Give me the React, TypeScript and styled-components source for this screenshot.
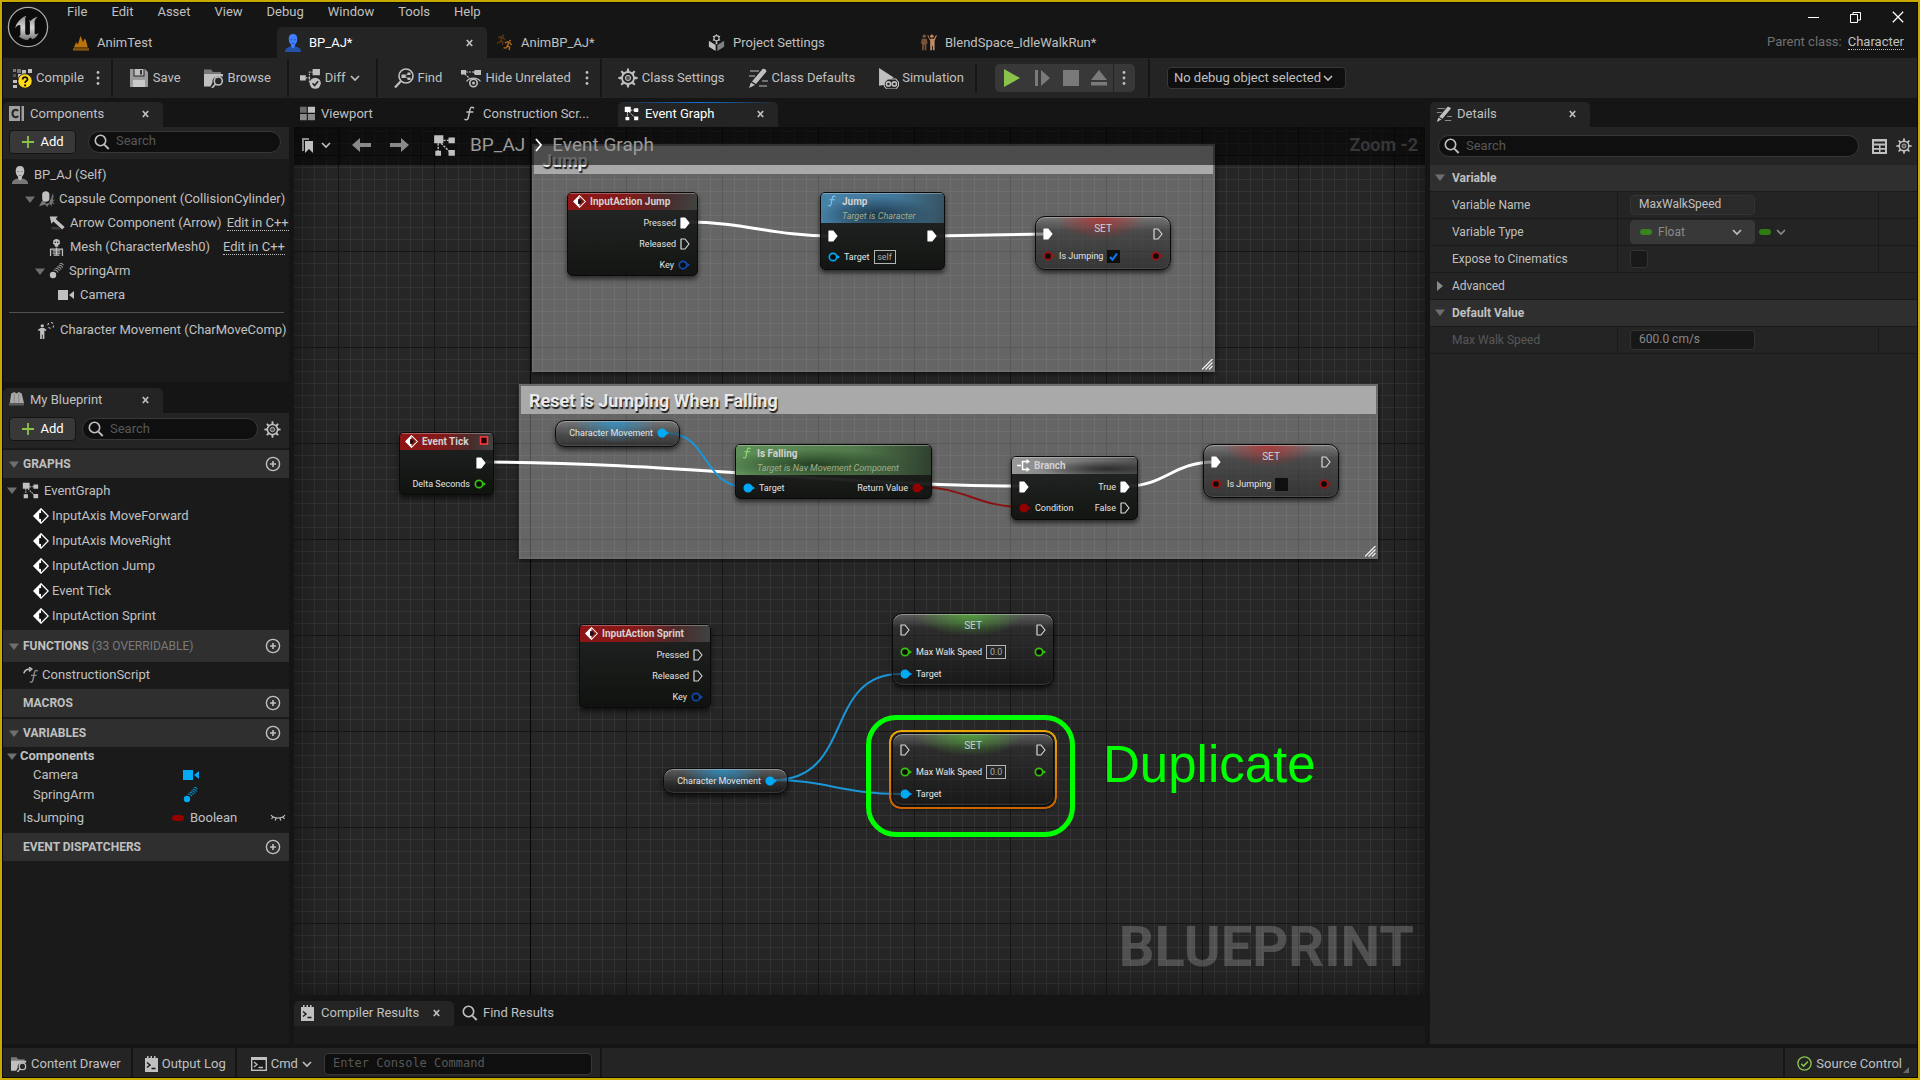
import React from "react";
import styled, { createGlobalStyle, css } from "styled-components";

const c = {
  title: "#151515",
  panel: "#242424",
  recess: "#1a1a1a",
  header: "#2f2f2f",
  input: "#0f0f0f",
  line: "#383838",
  text: "#c0c0c0",
  dim: "#575757",
  white: "#ffffff",
  blue: "#00aaf5",
  red: "#920000",
  green: "#35c20c",
};

const Global = createGlobalStyle`
  * { box-sizing: border-box; }
  body { margin: 0; background: ${c.title}; }
  body, button, input, select { font-family: Roboto, "Liberation Sans", sans-serif; font-size: 13px; line-height: 16px; color: ${c.text}; }
  button { border: 0; background: none; padding: 0; cursor: pointer; }
  input, select { margin: 0; outline: 0; }
  input::placeholder { color: ${c.dim}; opacity: 1; }
  ul { list-style: none; margin: 0; padding: 0; }
  h2, h3, p { margin: 0; font-weight: 400; font-size: 13px; }
  svg { display: block; flex: none; }
`;

/* ---------- icons ---------- */

type IconProps = { size?: number; w?: number; h?: number; box?: string; color?: string; children?: React.ReactNode };

const Svg = ({ size = 16, w, h, box = "0 0 20 20", color = c.text, children }: IconProps) => (
  <svg width={w ?? size} height={h ?? size} viewBox={box} fill={color} stroke="none" aria-hidden="true">
    {children}
  </svg>
);

const Chevron = ({ color = c.text }: { color?: string }) => (
  <Svg w={10} h={10} box="0 0 10 10">
    <path d="M1 3l4 4 4-4" fill="none" stroke={color} strokeWidth="1.6" />
  </Svg>
);
const Dots = () => (
  <Svg w={4} h={16} box="0 0 4 16">
    <circle cx="2" cy="2.5" r="1.4" />
    <circle cx="2" cy="8" r="1.4" />
    <circle cx="2" cy="13.5" r="1.4" />
  </Svg>
);
const Cross = () => (
  <Svg w={7} h={8} box="0 0 7 8">
    <path d="M.8 1l5.4 6M6.2 1L.8 7" stroke={c.text} strokeWidth="1.7" />
  </Svg>
);
const Lens = ({ size = 16 }: { size?: number }) => (
  <Svg size={size} box="0 0 16 16">
    <circle cx="6.5" cy="6.5" r="5.2" fill="none" stroke={c.text} strokeWidth="1.6" />
    <path d="M10.3 10.6l4.4 4.4" stroke={c.text} strokeWidth="1.8" />
  </Svg>
);
const Gear = ({ size = 16, color = c.text }: { size?: number; color?: string }) => (
  <Svg size={size}>
    <circle cx="10" cy="10" r="6" fill="none" stroke={color} strokeWidth="1.8" />
    <circle cx="10" cy="10" r="2.6" fill="#555" stroke={color} strokeWidth="1" />
    {[0, 45, 90, 135, 180, 225, 270, 315].map((a) => (
      <path key={a} d="M8.6 4.2L9.1.4h1.8l.5 3.8z" fill={color} transform={`rotate(${a} 10 10)`} />
    ))}
  </Svg>
);
const Plus = () => (
  <Svg size={14} box="0 0 14 14">
    <path d="M7 1v12M1 7h12" stroke="#8bc34a" strokeWidth="1.8" />
  </Svg>
);
const PlusCircle = () => (
  <Svg size={16} box="0 0 16 16">
    <circle cx="8" cy="8" r="6.6" fill="none" stroke={c.text} strokeWidth="1.4" />
    <path d="M8 5v6M5 8h6" stroke={c.text} strokeWidth="1.6" />
  </Svg>
);
const Down = () => (
  <Svg w={10} h={7} box="0 0 10 7" color="#6e6e6e">
    <path d="M0 .5h10L5 7z" />
  </Svg>
);
const Right = () => (
  <Svg w={10} h={10} box="0 0 10 10" color="#8a8a8a">
    <path d="M2 0v10l6-5z" />
  </Svg>
);
const Logo = () => (
  <Svg size={42} box="0 0 42 42">
    <defs>
      <linearGradient id="lg" x1="0" y1="0" x2="0" y2="1">
        <stop offset="0" stopColor="#8c8c8c" />
        <stop offset=".5" stopColor="#d6d6d6" />
        <stop offset="1" stopColor="#777" />
      </linearGradient>
    </defs>
    <circle cx="21" cy="21" r="19.6" fill="#0c0c0c" stroke="#a8a8a8" strokeWidth="1.3" />
    <path
      fill="url(#lg)"
      d="M20 9.500c-5.500 1.800-10.500 6.500-11.700 12.500 1.500-2 3.200-3.400 4.300-3 .8.300.8 1 .8 2v7.500c0 1.200-.7 1.600-1.600 1.700 2.300 2.400 5.700 3.700 9 3.700l2.300-2.500 2.500 1.900c2.800-1.300 5-3.600 6-6.600-1.300 1.200-2.500 1.800-3.300 1.600-.6-.2-.7-.8-.7-1.600V15.300c.7-2 1.900-3.500 3.300-4.500-2.500.4-5.500 1.900-7.200 4.100-.5-.5-1.300-.7-1.900-.7.900.9 1.100 1.700 1.100 2.700v10.800c-.8.900-1.700 1.200-2.600 1.200-1.300 0-2.100-.8-2.100-2.500V13.300c0-1.700.7-3 1.800-3.800z"
    />
  </Svg>
);
const Person = ({ color, body }: { color: string; body: string }) => (
  <Svg size={18} color={color}>
    <path d="M1 20c0-3.500 2.500-5 6.500-6h5c4 1 6.500 2.500 6.500 6z" fill={body} />
    <path d="M10 0C6.800 0 5.200 2.300 5.200 5.300c0 3.200 1.300 5.500 2.700 6.800v2.100L10 16l2.100-1.800v-2.100c1.400-1.300 2.700-3.600 2.700-6.800C14.800 2.300 13.200 0 10 0z" />
    <path d="M7 6.300h2M11 6.300h2M8.500 10.500h3" stroke={body} strokeWidth="1" />
  </Svg>
);
const LevelIcon = () => (
  <Svg size={16} color="#b8740a">
    <path d="M0 16.500h20v3H0z" opacity=".7" />
    <path d="M1 15.500L4 9l2 3L9.500 1l3 8L14 5l2 1 2.500 9.500z" />
  </Svg>
);
const Runner = ({ color, x = 0, y = 0, o = 1 }: { color: string; x?: number; y?: number; o?: number }) => (
  <g transform={`translate(${x} ${y})`} opacity={o} fill="none" stroke={color} strokeWidth="1.6">
    <circle cx="8.500" cy="1.800" r="1.100" fill={color} stroke="none" />
    <path d="M2.500 4.500L6 3l2.500 1.500L10.500 7M7 4L5.500 7.500 8 9.500 7.500 13M5.500 7.500L4.500 10 1 10.500" />
  </g>
);
const AnimBPIcon = () => (
  <Svg size={17}>
    <Runner color="#7a4512" o={0.7} />
    <Runner color="#b06a1e" x={8} y={6} />
  </Svg>
);
const ProjectIcon = () => (
  <Svg size={17}>
    <path d="M1 8l8 5v7l-8-5z" />
    <path d="M19 8l-8 5v7l8-5z" fill="#808080" />
    <circle cx="10" cy="5" r="3" fill="none" stroke={c.text} strokeWidth="1.400" />
    {[0, 60, 120, 180, 240, 300].map((a) => (
      <path key={a} d="M9.300 2L9.600 0h.8l.3 2z" transform={`rotate(${a} 10 5)`} />
    ))}
    <path d="M9 9.500h2V12H9z" />
  </Svg>
);
const BlendIcon = () => (
  <Svg size={17}>
    <g fill="#7a5238">
      <circle cx="5" cy="2.500" r="2" />
      <path d="M2 5.500h6l1 6H7.500V19h-2v-6h-1v6h-2v-7.500H1z" />
    </g>
    <g fill="#c08a63">
      <circle cx="14" cy="2.500" r="2" />
      <path d="M9.500 1l2 4.500h5L19 1l.8.8-2.600 6V19h-2v-5h-1v5h-2.200V8L8.700 2z" />
    </g>
  </Svg>
);
const CompileIcon = () => (
  <Svg size={21} box="0 0 21 21">
    <path d="M5 1h4v4H5zM1 1h3v3H1z" fill="#777" />
    <path d="M10 2h4v4h-4zM16 1h4v4h-4zM6 6h4v4H6zM1 12h4v3H1zM1 17h4v3H1zM11 6h4v3h-4z" />
    <path d="M1 6h3v3H1z" fill="#555" />
    <circle cx="13" cy="13" r="7.200" fill="#ffd91a" stroke="#111" strokeWidth=".8" />
    <path d="M10.700 11.500c0-3 4.800-3 4.800-.2 0 1.700-2.400 1.800-2.400 3.600" fill="none" stroke="#111" strokeWidth="1.800" />
    <circle cx="13.100" cy="17.300" r="1.100" fill="#111" />
  </Svg>
);
const SaveIcon = () => (
  <Svg size={20}>
    <path d="M1 1h3.500v7.500h11V1H16l3 3v15H1z" fill="#9a9a9a" />
    <path d="M5.500 1h9v6.500h-9z" />
    <path d="M11 2h2v4.500h-2z" fill="#333" />
    <path d="M4 12h12v7H4z" fill="#c9c9c9" />
  </Svg>
);
const FolderLens = ({ size = 20 }: { size?: number }) => (
  <Svg size={size}>
    <path d="M0 1.500h7l2 2.500h8v3H0z" fill="#777" />
    <path d="M0 6h19v2.500h-5c-4 0-6 3-5.500 6l-2 4H0z" />
    <circle cx="14.300" cy="13" r="4" fill="none" stroke={c.text} strokeWidth="1.600" />
    <path d="M11.500 16l-3.500 4" stroke={c.text} strokeWidth="1.800" />
  </Svg>
);
const DiffIcon = () => (
  <Svg size={21}>
    <path d="M0 7h5.500v5H0zM12 1h7v6h-7z" />
    <path d="M5.500 9.500H9M9 9.500V4h3M9 9.500V14h2" fill="none" stroke={c.text} strokeWidth="1.200" strokeDasharray="1.500 1" />
    <circle cx="14.500" cy="14.500" r="5.300" />
    <path d="M12 14.500l2 2.200 3.200-4" fill="none" stroke="#242424" strokeWidth="1.600" />
  </Svg>
);
const FindIcon = () => (
  <Svg size={20}>
    <circle cx="12" cy="8" r="7" fill="none" stroke={c.text} strokeWidth="1.600" />
    <path d="M7 13l-6 6.500" stroke={c.text} strokeWidth="2.200" />
    <path d="M7.500 6.500h4v3.500h-4zM13.500 4.500h3v2.500h-3zM13.500 9.500h3V12h-3z" />
    <path d="M11 8l3-2M11 8.500l3 2" stroke={c.text} strokeWidth=".8" />
  </Svg>
);
const HideIcon = () => (
  <Svg size={20}>
    <path d="M0 2h5v4.500H0zM13.500 2H20v5h-4z" />
    <circle cx="15.500" cy="4.500" r="2.600" />
    <path d="M5 4h8M4 6l5 5" stroke={c.text} strokeWidth="1.200" strokeDasharray="2 1" />
    <path d="M5.500 13.500c3-4.500 11-4.500 14 0" fill="none" stroke={c.text} strokeWidth="1.200" />
    <circle cx="12.500" cy="15" r="3.700" fill="none" stroke={c.text} strokeWidth="1.600" />
    <circle cx="12.500" cy="15" r="1.500" />
  </Svg>
);
const PencilIcon = ({ size = 20 }: { size?: number }) => (
  <Svg size={size}>
    <path d="M2 3h9M1 8h6M14 13h6M11 18h8" stroke="#8a8a8a" strokeWidth="1.300" />
    <path d="M14.500 1c1.500-.8 4 .8 4 2.500L8 16l-4-2.500z" />
    <path d="M3 14.500L7 17l-6 3z" />
  </Svg>
);
const SimIcon = () => (
  <Svg size={21}>
    <path d="M1 0l14 9-5 3-3 4-6 1z" />
    <path d="M6 13.500l3-3h8l2.500 3v3.500l-2.500 3H8.500L6 17.500z" fill="#242424" stroke={c.text} strokeWidth="1" />
    <circle cx="10" cy="15.200" r="2" fill="none" stroke={c.text} strokeWidth="1.500" />
    <circle cx="15.600" cy="15.200" r="2" fill="none" stroke={c.text} strokeWidth="1.500" />
  </Svg>
);
const GraphIcon = ({ size = 16, color = c.text }: { size?: number; color?: string }) => (
  <Svg size={size} color={color}>
    <path d="M1 1h8v7H1zM13.500 3h5.500v5h-5.500zM2 14.500h5V19H2zM13.500 14h5.500v5h-5.500z" />
    <path d="M9 5.500h5M7 8l7 7M4.500 8v7" stroke={color} strokeWidth="1.200" strokeDasharray="2 1" />
  </Svg>
);
const ViewportIcon = () => (
  <Svg size={15}>
    <path d="M0 1h9v8H0z" fill="#6a6a6a" />
    <path d="M10.500 1H20v8h-9.500z" />
    <path d="M0 10.500h9V19H0zM10.500 10.500H20V19h-9.500z" fill="#8a8a8a" />
  </Svg>
);
const FIcon = ({ size = 15, color = c.text }: { size?: number; color?: string }) => (
  <Svg size={size}>
    <path d="M15.500 2.500c-2.500-1.800-4.200-.5-4.800 2L8.500 15c-.5 2.800-2 4.200-4.500 2.700M6.500 8h8" fill="none" stroke={color} strokeWidth="1.900" strokeLinecap="round" />
  </Svg>
);
const ConstructIcon = () => (
  <Svg size={16}>
    <path d="M1 8c1-4 4-5.500 8-5.500M7.500 0L11 2.500 7.500 5.500" fill="none" stroke={c.text} strokeWidth="1.800" />
    <path d="M18.500 5c-2.500-1.500-3.700-.3-4.200 2L12.500 16c-.5 2.500-2 3.500-4 2.500M10 10.500h7" fill="none" stroke="#8a8a8a" strokeWidth="1.800" />
  </Svg>
);
const CompTabIcon = () => (
  <Svg size={15} box="0 0 15 15">
    <path d="M0 0h11v15H0z" fill="#a0a0a0" />
    <path d="M9 5.200C8 3 3.500 3.200 3.500 7.500S8 12 9 9.800" fill="none" stroke="#242424" strokeWidth="2" />
    <path d="M12.500 0H15v15h-2.500z" fill="#a0a0a0" />
  </Svg>
);
const BookIcon = () => (
  <Svg size={15}>
    <path d="M3 2l4-2 3 2 3-2 4 2 3 13H1z" fill="#a9a9a9" />
    <path d="M0 15h20v3H0z" fill="#5c5c5c" />
    <path d="M7 2v12M13 2v12" stroke="#777" strokeWidth="1" />
  </Svg>
);
const CapsuleIcon = () => (
  <Svg size={16}>
    <path d="M0 19l4-7 3 1 2 3 4-1 1-4 5-6-2 6h3l-3 2 3 4-4-2v4l-3-3-3 4-2-3z" fill="#777" />
    <path d="M15 8l3-6-1 6z" fill="#777" />
    <path d="M4 4c0-5 9-5 9 0v6c0 4.500-9 4.500-9 0z" />
  </Svg>
);
const ArrowIcon = () => (
  <Svg size={16}>
    <path d="M1 2h10L8.500 5l11 10-3 3-11-10L3 11z" />
    <path d="M2 15h10l3 3H4z" fill="#3a3a3a" />
  </Svg>
);
const SkeletonIcon = () => (
  <Svg size={17}>
    <path d="M6 3c0-4 8-4 8 0v3l-2 1v2H8V7L6 6z" />
    <circle cx="8.500" cy="3.800" r=".9" fill="#1a1a1a" />
    <circle cx="11.500" cy="3.800" r=".9" fill="#1a1a1a" />
    <path d="M3 20v-8h14v8M10 10v9M5.500 14h9M5.500 16.500h9M6.500 19h7" fill="none" stroke={c.text} strokeWidth="1.500" />
  </Svg>
);
const SpringIcon = ({ color = c.text }: { color?: string }) => (
  <Svg size={16}>
    <circle cx="5" cy="15" r="4" fill={color} />
    <path d="M6 9c2-1 5 1 5 3M8 7c2-1 5 1 5 3M10 5c2-1 5 1 5 3M12 3c2-1 5 1 5 3M13.500 1c2-1 4 0 4.500 1.500" fill="none" stroke={color} strokeWidth="1.300" opacity=".75" />
  </Svg>
);
const CameraIcon = ({ color = c.text }: { color?: string }) => (
  <Svg w={17} h={16} box="0 0 17 16" color={color}>
    <path d="M0 3h10v10H0zM16 4v8l-5-4z" />
  </Svg>
);
const MoveIcon = () => (
  <Svg size={17}>
    <circle cx="5" cy="4.500" r="2" />
    <path d="M0 9l3-2h4l3 2-.8 1.500L7.500 10v10h-2v-5h-1v5h-2V10l-2 .6z" />
    <circle cx="15" cy="4" r="3.400" fill="none" stroke={c.text} strokeWidth="1.300" strokeDasharray="2.700 2.600" />
  </Svg>
);
const EventIcon = ({ size = 16 }: { size?: number }) => (
  <Svg size={size} color="#fff">
    <path d="M10 1l9 9-9 9-9-9z" fill="none" stroke="#fff" strokeWidth="1.600" />
    <path d="M10 1v5.500H8v7h2V19l-9-9z" />
    <path d="M8 6.500h2.500L14 10l-3.500 3.500H8z" fill="#111" />
  </Svg>
);
const LashIcon = () => (
  <Svg w={16} h={10} box="0 0 16 10">
    <path d="M1 2c3 4 11 4 14 0M3 4L1.500 6M6 5l-.8 2.500M10 5l.8 2.500M13 4l1.500 2" fill="none" stroke={c.text} strokeWidth="1.200" />
  </Svg>
);
const LogIcon = () => (
  <Svg w={13} h={16} box="0 0 13 16">
    <path d="M0 2h2V0h1.500v2h2V0H7v2h2V0h1.500v2H13v14H0z" />
    <path d="M2 6.500l3 2.500-3 2.500M6.500 12.500h4" fill="none" stroke="#151515" strokeWidth="1.400" />
  </Svg>
);
const CmdIcon = () => (
  <Svg w={16} h={14} box="0 0 16 14">
    <path d="M0 0h16v14H0z" />
    <path d="M1.400 3h13.200v9.600H1.400z" fill="#1a1a1a" />
    <path d="M3 5l3 2.500L3 10M7.500 10.500H12" fill="none" stroke={c.text} strokeWidth="1.300" />
  </Svg>
);
const CheckCircle = () => (
  <Svg size={15} box="0 0 15 15">
    <circle cx="7.500" cy="7.500" r="6.600" fill="none" stroke="#8bc34a" strokeWidth="1.400" />
    <path d="M4.300 7.800l2.300 2.300 4.300-4.600" fill="none" stroke="#8bc34a" strokeWidth="1.500" />
  </Svg>
);
const TableIcon = () => (
  <Svg w={15} h={15} box="0 0 15 15">
    <path d="M0 0h15v15H0z" />
    <path d="M2 2.500h11v2H2zM2 6.500h5v2.500H2zM8.500 6.500H13v2.500H8.500zM2 10.700h5V13H2zM8.500 10.700H13V13H8.500z" fill="#242424" />
  </Svg>
);
const BookmarkIcon = () => (
  <Svg w={11} h={15} box="0 0 11 15">
    <path d="M0 0h7v2H2v11H0z" fill="#8a8a8a" />
    <path d="M3 3h8v12l-4-4-4 4z" />
  </Svg>
);
const NavArrow = ({ flip }: { flip?: boolean }) => (
  <Svg w={19} h={16} box="0 0 19 16" color="#8a8a8a">
    <path d="M0 8l8-7v5h11v4H8v5z" transform={flip ? "translate(19 0) scale(-1 1)" : undefined} />
  </Svg>
);

/* ---------- window frame ---------- */

const Frame = styled.div`
  height: 100vh;
  min-height: 720px;
  display: flex;
  flex-direction: column;
  background: ${c.title};
  border: 2px solid #c8a900;
`;
const Inner = styled.div`
  flex: 1;
  min-height: 0;
  display: flex;
  flex-direction: column;
  border: 1px solid #0a0a0a;
`;
const TitleBar = styled.header`
  display: flex;
  height: 55px;
`;
const LogoCell = styled.div`
  width: 52px;
  padding: 3px 0 0 4px;
`;
const TitleMain = styled.div`
  flex: 1;
`;
const Menu = styled.nav`
  display: flex;
  height: 24px;
  button { padding: 0 12px 6px; }
`;
const DocTabs = styled.div`
  display: flex;
  gap: 2px;
  padding-left: 10px;
`;
const DocTab = styled.button<{ $active?: boolean }>`
  width: 210px;
  height: 31px;
  display: flex;
  align-items: center;
  gap: 8px;
  padding: 0 14px 0 7px;
  border-radius: 5px 5px 0 0;
  ${(p) => p.$active && css`background: ${c.panel}; color: ${c.white};`}
`;
const Grow = styled.span`
  flex: 1;
  text-align: left;
`;
const IconSlot = styled.span`
  width: 17px;
  display: flex;
  justify-content: center;
`;
const WindowSide = styled.div`
  display: flex;
  flex-direction: column;
  align-items: flex-end;
  padding-right: 13px;
`;
const WindowButtons = styled.div`
  display: flex;
  gap: 31px;
  height: 28px;
  align-items: center;
`;
const ParentClass = styled.p`
  display: flex;
  gap: 6px;
  padding-top: 3px;
  color: #707070;
`;
const DottedLink = styled.a`
  color: ${c.text};
  text-decoration: none;
  border-bottom: 1px dotted ${c.text};
  line-height: 15px;
  white-space: nowrap;
`;

/* ---------- toolbar ---------- */

const Toolbar = styled.div`
  display: flex;
  height: 40px;
  background: ${c.panel};
`;
const PlainSection = styled.div`
  display: flex;
  align-items: center;
  padding-left: 4px;
`;
const Section = styled(PlainSection)`
  margin: 1px 0;
  padding-right: 5px;
  border-right: 2px solid ${c.title};
`;
const ToolButton = styled.button<{ $lead?: number; $trail?: number }>`
  display: flex;
  align-items: center;
  gap: 4px;
  padding: 0 ${(p) => p.$trail ?? 11}px 0 ${(p) => p.$lead ?? 12}px;
  white-space: nowrap;
`;
const ToolIcon = styled.span`
  width: 20px;
  display: flex;
  justify-content: center;
`;
const DotsButton = styled.button`
  width: 16px;
  display: flex;
  justify-content: center;
`;
const PlayWrap = styled.div`
  display: flex;
  align-items: center;
  padding: 0 13px 0 18px;
  margin: 6px 0;
  border-left: 2px solid ${c.title};
`;
const PlayGroup = styled.div`
  display: flex;
  height: 28px;
  background: ${c.line};
  border-radius: 5px;
  button { width: 28px; display: flex; align-items: center; justify-content: center; }
  button:first-child { width: 34px; }
  button:last-child { width: 22px; border-left: 1px solid #242424; }
`;
const PickerArea = styled.div`
  display: flex;
  align-items: center;
  padding-left: 17px;
  margin: 1px 0;
  border-left: 2px solid ${c.title};
`;
const SelectBox = styled.span<{ $width: number; $flat?: boolean }>`
  position: relative;
  display: flex;
  align-items: center;
  width: ${(p) => p.$width}px;
  height: ${(p) => (p.$flat ? 24 : 22)}px;
  border: 1px solid ${c.line};
  border-radius: 4px;
  background: ${(p) => (p.$flat ? c.line : c.input)};
  select {
    appearance: none;
    width: 100%;
    height: 100%;
    border: 0;
    background: none;
    padding: 0 24px 0 ${(p) => (p.$flat ? 27 : 6)}px;
    ${(p) => p.$flat && css`font-size: 12px; color: #8a8a8a;`}
  }
  > svg { position: absolute; right: 12px; pointer-events: none; }
`;

/* ---------- dock ---------- */

const Dock = styled.main`
  flex: 1;
  min-height: 0;
  display: grid;
  grid-template-columns: 286px minmax(0, 1fr) 487px;
  gap: 5px;
  padding: 4px 0;
`;
const Column = styled.section`
  display: flex;
  flex-direction: column;
  min-height: 0;
  min-width: 0;
`;
const Tabs = styled.div`
  display: flex;
  gap: 2px;
  height: 25px;
  flex: none;
`;
const ResultTabs = styled(Tabs)`
  margin-top: 6px;
`;
const PanelTab = styled.button<{ $active?: boolean; $focus?: boolean }>`
  width: 160px;
  display: flex;
  align-items: center;
  gap: 6px;
  padding: 0 14px 2px 6px;
  border-radius: 5px 5px 0 0;
  white-space: nowrap;
  ${(p) => p.$active && css`background: ${c.panel};`}
  ${(p) =>
    p.$focus &&
    css`
      color: ${c.white};
      background: linear-gradient(90deg, #242424, #0f70d8 50%, #242424) top / 100% 1px no-repeat, ${c.panel};
    `}
`;
const TabIcon = styled.span`
  width: 15px;
  display: flex;
  justify-content: center;
`;
const ActionRow = styled.div<{ $height: number; $gap: number }>`
  display: flex;
  align-items: center;
  flex: none;
  height: ${(p) => p.$height}px;
  gap: ${(p) => p.$gap}px;
  padding: 0 8px 3px 6px;
  background: ${c.panel};
`;
const AddButton = styled.button`
  flex: none;
  width: 67px;
  height: 24px;
  display: flex;
  align-items: center;
  justify-content: center;
  gap: 5px;
  color: ${c.white};
  background: #383838;
  border: 1px solid #141414;
  border-radius: 4px;
`;
const SearchBox = styled.label`
  flex: 1;
  min-width: 0;
  height: 22px;
  display: flex;
  align-items: center;
  gap: 6px;
  padding: 0 8px 0 5px;
  background: ${c.input};
  border: 1px solid ${c.line};
  border-radius: 11px;
  input { flex: 1; min-width: 0; height: 20px; border: 0; background: none; padding: 0 0 2px; }
`;
const Tree = styled.ul`
  height: 223px;
  flex: none;
  padding-top: 4px;
  background: ${c.recess};
  border-radius: 0 0 3px 3px;
  margin-bottom: 6px;
`;
const TreeRow = styled.li<{ $indent: number; $height?: number; $gap?: number }>`
  display: flex;
  align-items: center;
  gap: ${(p) => p.$gap ?? 5}px;
  height: ${(p) => p.$height ?? 24}px;
  padding-left: ${(p) => p.$indent}px;
  white-space: nowrap;
`;
const Twist = styled.span`
  width: 10px;
  display: flex;
  flex: none;
`;
const EditLink = styled(DottedLink)`
  margin: 0 4px 0 auto;
`;
const Divider = styled.li`
  height: 1px;
  margin: 5px 5px 5px 6px;
  background: #505050;
`;
const Outline = styled.div`
  flex: 1;
  min-height: 0;
  overflow: hidden;
  background: ${c.recess};
`;
const GroupHead = styled.h3<{ $height?: number }>`
  display: flex;
  align-items: center;
  gap: 4px;
  height: ${(p) => p.$height ?? 28}px;
  margin-top: 2px;
  padding: 0 8px 0 6px;
  background: ${c.header};
  font-size: 12px;
  font-weight: 700;
  small { font-size: 12px; font-weight: 400; color: #7a7a7a; }
`;
const VarRow = styled.li<{ $indent: number; $height: number }>`
  display: grid;
  grid-template-columns: ${(p) => 169 - p.$indent}px 1fr 16px;
  align-items: center;
  height: ${(p) => p.$height}px;
  padding: 0 3px 0 ${(p) => p.$indent}px;
`;
const TypeCell = styled.span<{ $icon?: boolean }>`
  display: flex;
  align-items: center;
  gap: 6px;
  padding-left: ${(p) => (p.$icon ? 11 : 0)}px;
`;
const Pill = styled.i<{ $color: string }>`
  width: 12px;
  height: 6px;
  border-radius: 3px;
  background: ${(p) => p.$color};
`;
const Spring = styled.span`
  flex: 1;
`;

/* ---------- graph ---------- */

const Canvas = styled.div`
  position: relative;
  flex: 1;
  min-height: 0;
  overflow: hidden;
  background-color: #262626;
  background-image: linear-gradient(90deg, #060606 1px, transparent 1px),
    linear-gradient(90deg, #161616 1px, transparent 1px), linear-gradient(#161616 1px, transparent 1px),
    linear-gradient(90deg, #343434 1px, transparent 1px), linear-gradient(#343434 1px, transparent 1px);
  background-size: 2000px 100%, 96px 96px, 96px 96px, 12px 12px, 12px 12px;
  background-position: 236px 0, 44px 28px, 44px 28px, 8px 4px, 8px 4px;
`;
const Vignette = styled.div`
  position: absolute;
  inset: 0;
  pointer-events: none;
  box-shadow: inset 0 0 44px rgba(0, 0, 0, 0.5);
`;
const Wires = styled.svg`
  position: absolute;
  inset: 0;
  width: 100%;
  height: 100%;
  fill: none;
`;
const GraphBar = styled.div`
  position: absolute;
  inset: 0 0 auto 0;
  height: 38px;
  display: flex;
  align-items: center;
  padding: 0 7px 2px 8px;
  background: rgba(0, 0, 0, 0.55);
  line-height: 22px;
  color: #9a9a9a;
`;
const BarButton = styled.button<{ $width: number; $lead?: number; $split?: boolean }>`
  width: ${(p) => p.$width}px;
  height: 38px;
  display: flex;
  align-items: center;
  gap: 8px;
  padding-left: ${(p) => p.$lead ?? 0}px;
  ${(p) => p.$split && css`border-right: 2px solid #0c0c0c;`}
`;
const Crumbs = styled.nav`
  flex: 1;
  display: flex;
  align-items: center;
  gap: 10px;
  padding-left: 11px;
  font-size: 19px;
  span:first-of-type { padding-left: 4px; }
`;
const ZoomText = styled.span`
  font-size: 18px;
  font-weight: 700;
  color: #363636;
`;
const Comment = styled.section<{ $x: number; $y: number; $w: number; $h: number }>`
  position: absolute;
  left: ${(p) => p.$x}px;
  top: ${(p) => p.$y}px;
  width: ${(p) => p.$w}px;
  height: ${(p) => p.$h}px;
  display: flex;
  flex-direction: column;
  justify-content: space-between;
  align-items: flex-end;
  padding: 2px;
  background: rgba(255, 255, 255, 0.29);
  box-shadow: inset 0 0 0 2px rgba(110, 110, 110, 0.7), 0 2px 6px rgba(0, 0, 0, 0.6);
  h2 {
    width: 100%;
    height: 28px;
    padding-left: 8px;
    line-height: 29px;
    font-size: 18px;
    font-weight: 700;
    color: #e9e9e9;
    text-shadow: 1px 2px 1px #1a1a1a;
    background: #a9a9a9;
  }
`;
const Grip = () => (
  <Svg size={11} box="0 0 11 11">
    <path d="M0 10.500L10.500 0M3.500 10.500l7-7M7 10.500L10.500 7" stroke="#eee" strokeWidth="1.300" />
  </Svg>
);

const Node = styled.article<{ $x: number; $y: number; $w: number; $h: number; $soft?: boolean; $selected?: boolean; $glow?: string }>`
  position: absolute;
  left: ${(p) => p.$x}px;
  top: ${(p) => p.$y}px;
  width: ${(p) => p.$w}px;
  height: ${(p) => p.$h}px;
  overflow: hidden;
  font-size: 9px;
  line-height: 12px;
  color: #e4e4e4;
  border: 1px solid #0a0a0a;
  border-radius: 5px;
  background: linear-gradient(rgba(32, 35, 33, 0.93), rgba(14, 17, 14, 0.95));
  box-shadow: 0 3px 5px rgba(0, 0, 0, 0.6);
  ${(p) =>
    p.$soft &&
    css`
      border-radius: 10px;
      background: radial-gradient(ellipse 34% 22px at 48% 0, ${p.$glow}, transparent),
        linear-gradient(rgba(130, 130, 130, 0.6), rgba(50, 50, 50, 0.55) 14px, rgba(14, 14, 14, 0.55));
      box-shadow: inset 0 1px 0 rgba(200, 200, 200, 0.5), inset 0 -1px 0 rgba(140, 140, 140, 0.25), 0 3px 5px rgba(0, 0, 0, 0.6);
    `}
  ${(p) => p.$selected && css`overflow: visible;`}
`;
const Selection = styled.div`
  position: absolute;
  inset: -4px;
  border-radius: 12px;
  border: 2px solid transparent;
  background: linear-gradient(#f0a800, #cc6200) border-box;
  mask: linear-gradient(#000 0 0) padding-box exclude, linear-gradient(#000 0 0);
  pointer-events: none;
`;
const NodeHead = styled.header<{ $tone: string; $tall?: boolean }>`
  height: ${(p) => (p.$tall ? 30 : 17)}px;
  display: flex;
  gap: 4px;
  padding: 2px 4px 0 5px;
  background: ${(p) => p.$tone};
  box-shadow: inset 0 1px 0 rgba(255, 255, 255, 0.3);
  h3 { flex: 1; font-size: 10px; line-height: 13px; font-weight: 700; color: #d2d2d2; }
  em { display: block; margin-top: 2px; font-size: 9px; line-height: 12px; font-weight: 400; color: #a3ad8b; }
`;
const Rows = styled.div<{ $pad?: number; $row?: number }>`
  padding: ${(p) => p.$pad ?? 2}px 7px 0;
  display: grid;
  grid-auto-rows: ${(p) => p.$row ?? 21}px;
`;
const PinRow = styled.div`
  display: flex;
  align-items: center;
  justify-content: space-between;
`;
const PinSide = styled.span`
  display: flex;
  align-items: center;
  gap: 4px;
`;
const SetTitle = styled.h3`
  position: absolute;
  inset: 5px 0 auto 0;
  text-align: center;
  font-size: 10px;
  line-height: 14px;
  color: #cfcfcf;
`;
const ValueInput = styled.input<{ $w: number }>`
  width: ${(p) => p.$w}px;
  height: 14px;
  padding: 0;
  text-align: center;
  font-size: 9px;
  line-height: 12px;
  color: #a8a8a8;
  background: none;
  border: 1px solid #b4b4b4;
`;
const NodeCheck = styled.input`
  appearance: none;
  width: 13px;
  height: 13px;
  background: #0f0f0f;
`;
const CheckWrap = styled.span`
  position: relative;
  display: flex;
  svg { position: absolute; inset: 0; pointer-events: none; }
`;
const VarNode = styled(Node)`
  display: flex;
  align-items: center;
  justify-content: flex-end;
  gap: 4px;
  padding: 0 10px 1px 0;
`;
const Watermark = styled.p`
  position: absolute;
  right: 11px;
  bottom: 16px;
  font-size: 56px;
  line-height: 64px;
  font-weight: 700;
  color: rgba(255, 255, 255, 0.2);
`;
const Highlight = styled.div`
  position: absolute;
  left: 572px;
  top: 588px;
  width: 209px;
  height: 122px;
  border: 5px solid #00ff00;
  border-radius: 30px;
  pointer-events: none;
`;
const Callout = styled.p`
  position: absolute;
  left: 809px;
  top: 610px;
  font: 51px/56px "Liberation Sans", Arial, sans-serif;
  color: #00ff00;
`;

const Exec = ({ on }: { on?: boolean }) => (
  <Svg w={10} h={12} box="0 0 10 12" color={on ? "#fff" : "none"}>
    <path d="M1 1h4l4 5-4 5H1z" stroke={on ? "#fff" : "#d8d8d8"} strokeWidth="1.200" strokeLinejoin="round" />
  </Svg>
);
const Pin = ({ color, on }: { color: string; on?: boolean }) => (
  <Svg w={12} h={10} box="0 0 12 10" color={on ? color : "#0c0c0c"}>
    <circle cx="5" cy="5" r="3.700" stroke={color} strokeWidth="1.700" />
    <path d="M9.200 3L12 5 9.200 7z" fill={color} />
  </Svg>
);

const redHead = "linear-gradient(100deg, #8f1515, #841a1a 45%, #4a2b2b 75%, #3f4442)";
const blueHead = "radial-gradient(ellipse at 45% 75%, rgba(15,30,45,.75), transparent 60%), linear-gradient(100deg, #4783a8, #42779a 60%, #35505e)";
const greenHead = "radial-gradient(ellipse at 40% 65%, rgba(20,45,20,.75), transparent 55%), linear-gradient(100deg, #5f8f58, #527a4c 60%, #2f3f2e)";
const greyHead = "radial-gradient(ellipse at 75% 70%, rgba(30,30,30,.8), transparent 50%), linear-gradient(100deg, #9a9a9a, #777 55%, #555)";

const InputAction = ({ name, x, y, w, pressed }: { name: string; x: number; y: number; w: number; pressed?: boolean }) => (
  <Node $x={x} $y={y} $w={w} $h={84}>
    <NodeHead $tone={redHead}>
      <EventIcon size={13} />
      <h3>{name}</h3>
    </NodeHead>
    <Rows>
      <PinRow><span /><PinSide>Pressed <Exec on={pressed} /></PinSide></PinRow>
      <PinRow><span /><PinSide>Released <Exec /></PinSide></PinRow>
      <PinRow><span /><PinSide>Key <Pin color="#0d4bb0" /></PinSide></PinRow>
    </Rows>
  </Node>
);

const SetBool = ({ x, y, checked }: { x: number; y: number; checked?: boolean }) => (
  <Node $x={x} $y={y} $w={136} $h={54} $soft $glow="rgba(190,40,40,.75)">
    <SetTitle>SET</SetTitle>
    <Rows $pad={6} $row={22}>
      <PinRow><Exec on /><Exec /></PinRow>
      <PinRow>
        <PinSide as="label">
          <Pin color="#a11212" />
          Is Jumping
          <CheckWrap>
            <NodeCheck type="checkbox" defaultChecked={checked} />
            {checked && (
              <Svg size={13} box="0 0 13 13">
                <path d="M3 7l2.500 2.700L10 3.500" fill="none" stroke="#0d7bf0" strokeWidth="2" />
              </Svg>
            )}
          </CheckWrap>
        </PinSide>
        <Pin color="#a11212" />
      </PinRow>
    </Rows>
  </Node>
);

const SetSpeed = ({ y, selected }: { y: number; selected?: boolean }) => (
  <Node $x={598} $y={y} $w={162} $h={73} $soft $selected={selected} $glow="rgba(80,180,50,.75)">
    <SetTitle>SET</SetTitle>
    <Rows $pad={5} $row={22}>
      <PinRow><Exec /><Exec /></PinRow>
      <PinRow>
        <PinSide as="label">
          <Pin color={c.green} />
          Max Walk Speed
          <ValueInput $w={20} defaultValue="0.0" />
        </PinSide>
        <Pin color={c.green} />
      </PinRow>
      <PinRow><PinSide><Pin color={c.blue} on /> Target</PinSide></PinRow>
    </Rows>
    {selected && <Selection />}
  </Node>
);

const Graph = () => (
  <Canvas>
    <Vignette />
    <Comment $x={238} $y={17} $w={683} $h={228}>
      <h2>Jump</h2>
      <Grip />
    </Comment>
    <Comment $x={225} $y={257} $w={859} $h={175}>
      <h2>Reset is Jumping When Falling</h2>
      <Grip />
    </Comment>
    <Wires>
      <g stroke="#fff" strokeWidth="3">
        <path d="M394 95C450 95 480 109 538 109" />
        <path d="M640 109L752 107" />
        <path d="M190 335C370 335 550 359 726 359" />
        <path d="M834 359C870 359 880 335 920 335" />
      </g>
      <g stroke="#1a96d8" strokeWidth="2">
        <path d="M372 306C416 306 408 360 452 360" />
        <path d="M480 653C560 653 530 547 606 547" />
        <path d="M480 653C530 653 550 667 606 667" />
      </g>
      <path d="M626 360C670 360 684 380 728 380" stroke="#8b1010" strokeWidth="2" />
    </Wires>

    <InputAction name="InputAction Jump" x={273} y={65} w={131} pressed />
    <Node $x={526} $y={65} $w={125} $h={78}>
      <NodeHead $tone={blueHead} $tall>
        <FIcon size={12} color="#7cc4f0" />
        <h3>Jump<em>Target is Character</em></h3>
      </NodeHead>
      <Rows>
        <PinRow><Exec on /><Exec on /></PinRow>
        <PinRow>
          <PinSide as="label"><Pin color={c.blue} /> Target <ValueInput $w={22} defaultValue="self" /></PinSide>
        </PinRow>
      </Rows>
    </Node>
    <SetBool x={741} y={89} checked />

    <Node $x={105} $y={305} $w={95} $h={63}>
      <NodeHead $tone={redHead}>
        <EventIcon size={13} />
        <h3>Event Tick</h3>
        <Svg size={10} box="0 0 10 10">
          <path d="M1.500 2h7v7h-7z" fill="#200" stroke="#ff3a3a" strokeWidth="1.600" />
        </Svg>
      </NodeHead>
      <Rows>
        <PinRow><span /><Exec on /></PinRow>
        <PinRow><span /><PinSide>Delta Seconds <Pin color={c.green} /></PinSide></PinRow>
      </Rows>
    </Node>
    <VarNode $x={261} $y={293} $w={125} $h={27} $soft $glow="rgba(40,150,210,.8)">
      Character Movement <Pin color={c.blue} on />
    </VarNode>
    <Node $x={441} $y={317} $w={197} $h={55}>
      <NodeHead $tone={greenHead} $tall>
        <FIcon size={12} color="#8ee07a" />
        <h3>Is Falling<em>Target is Nav Movement Component</em></h3>
      </NodeHead>
      <Rows>
        <PinRow>
          <PinSide><Pin color={c.blue} on /> Target</PinSide>
          <PinSide>Return Value <Pin color={c.red} on /></PinSide>
        </PinRow>
      </Rows>
    </Node>
    <Node $x={717} $y={329} $w={127} $h={64}>
      <NodeHead $tone={greyHead}>
        <Svg size={13} box="0 0 13 13">
          <path d="M0 6.500h4M11 2.500H5.500v8H11" fill="none" stroke="#fff" strokeWidth="1.500" />
          <path d="M9.500 0L13 2.500 9.500 5zM9.500 8l3.500 2.500L9.500 13z" fill="#fff" />
        </Svg>
        <h3>Branch</h3>
      </NodeHead>
      <Rows>
        <PinRow><Exec on /><PinSide>True <Exec on /></PinSide></PinRow>
        <PinRow>
          <PinSide><Pin color={c.red} on /> Condition</PinSide>
          <PinSide>False <Exec /></PinSide>
        </PinRow>
      </Rows>
    </Node>
    <SetBool x={909} y={317} />

    <InputAction name="InputAction Sprint" x={285} y={497} w={132} />
    <VarNode $x={369} $y={641} $w={125} $h={26} $soft $glow="rgba(40,150,210,.8)">
      Character Movement <Pin color={c.blue} on />
    </VarNode>
    <SetSpeed y={486} />
    <SetSpeed y={606} selected />
    <Highlight />
    <Callout>Duplicate</Callout>
    <Watermark>BLUEPRINT</Watermark>

    <GraphBar>
      <BarButton $width={39} $split aria-label="Bookmarks"><BookmarkIcon /><Chevron /></BarButton>
      <BarButton $width={49} $lead={11} aria-label="Back"><NavArrow /></BarButton>
      <BarButton $width={32} $split aria-label="Forward"><NavArrow flip /></BarButton>
      <Crumbs>
        <GraphIcon size={23} />
        <span>BP_AJ</span>
        <Svg w={7} h={14} box="0 0 7 14"><path d="M1 1l5 6-5 6" fill="none" stroke="#fff" strokeWidth="1.800" /></Svg>
        <span>Event Graph</span>
      </Crumbs>
      <ZoomText>Zoom -2</ZoomText>
    </GraphBar>
  </Canvas>
);

/* ---------- details ---------- */

const Details = styled.div`
  flex: 1;
  min-height: 0;
  background: ${c.panel};
  font-size: 12px;
`;
const DetailSearch = styled.div`
  display: flex;
  align-items: center;
  gap: 9px;
  height: 38px;
  padding: 0 5px 0 8px;
  label { margin-right: 4px; }
`;
const Category = styled.h3`
  display: flex;
  align-items: center;
  gap: 7px;
  height: 27px;
  padding: 0 0 1px 5px;
  background: ${c.header};
  border-bottom: 1px solid ${c.recess};
  font-size: 12px;
  font-weight: 700;
`;
const SubCategory = styled(Category)`
  background: none;
  font-weight: 400;
`;
const PropRow = styled.div<{ $off?: boolean }>`
  display: grid;
  grid-template-columns: 187px 1fr 39px;
  height: 27px;
  border-bottom: 1px solid ${c.recess};
  color: ${(p) => (p.$off ? c.dim : c.text)};
  > * { display: flex; align-items: center; }
  > label { padding: 0 0 1px 22px; }
  > div { gap: 4px; padding-left: 12px; border-left: 1px solid ${c.recess}; }
`;
const TextField = styled.input<{ $off?: boolean }>`
  width: 125px;
  height: 20px;
  padding: 0 8px 2px;
  font-size: 12px;
  background: ${(p) => (p.$off ? "#171717" : "#2a2a2a")};
  border: 1px solid #333;
  border-radius: 4px;
  ${(p) => p.$off && css`color: #8a8a8a;`}
`;
const Tick = styled.input`
  appearance: none;
  width: 18px;
  height: 18px;
  background: #191919;
  border: 1px solid #333;
  border-radius: 3px;
`;
const FloatPill = styled(Pill)`
  position: absolute;
  left: 9px;
`;
const KindButton = styled.button`
  display: flex;
  align-items: center;
  gap: 5px;
`;

/* ---------- footer ---------- */

const ResultsBody = styled.div`
  height: 18px;
  flex: none;
  background: ${c.recess};
`;
const StatusBar = styled.footer`
  display: flex;
  position: relative;
  height: 29px;
  background: ${c.panel};
`;
const StatusCell = styled.div<{ $lead: number; $trail: number; $left?: boolean }>`
  display: flex;
  align-items: center;
  padding: 2px ${(p) => p.$trail}px 0 ${(p) => p.$lead}px;
  border-${(p) => (p.$left ? "left" : "right")}: 2px solid ${c.title};
  button { display: flex; align-items: center; gap: 4px; white-space: nowrap; }
`;
const ConsoleInput = styled.input`
  width: 268px;
  height: 22px;
  margin-left: 12px;
  padding: 0 8px 2px;
  font-family: "DejaVu Sans Mono", monospace;
  font-size: 12px;
  background: ${c.input};
  border: 1px solid ${c.line};
  border-radius: 4px;
`;
const CornerGrip = styled.span`
  position: absolute;
  right: 8px;
  bottom: 4px;
`;

const docTabs = [
  { name: "AnimTest", icon: <LevelIcon /> },
  { name: "BP_AJ*", icon: <Person color="#3f7fff" body="#2450a8" />, active: true },
  { name: "AnimBP_AJ*", icon: <AnimBPIcon /> },
  { name: "Project Settings", icon: <ProjectIcon /> },
  { name: "BlendSpace_IdleWalkRun*", icon: <BlendIcon /> },
];

const events = ["InputAxis MoveForward", "InputAxis MoveRight", "InputAction Jump", "Event Tick", "InputAction Sprint"];

const Group = ({ title, note, open, height }: { title: string; note?: string; open?: boolean; height?: number }) => (
  <GroupHead $height={height}>
    <Twist>{open && <Down />}</Twist>
    <Grow>{title} {note && <small>{note}</small>}</Grow>
    <button aria-label={`Add to ${title}`}><PlusCircle /></button>
  </GroupHead>
);

const Search = () => (
  <SearchBox>
    <Lens />
    <input placeholder="Search" aria-label="Search" />
  </SearchBox>
);

export default function App() {
  return (
    <Frame>
      <Global />
      <Inner>
        <TitleBar>
          <LogoCell><Logo /></LogoCell>
          <TitleMain>
            <Menu>
              {["File", "Edit", "Asset", "View", "Debug", "Window", "Tools", "Help"].map((m) => <button key={m}>{m}</button>)}
            </Menu>
            <DocTabs>
              {docTabs.map((t) => (
                <DocTab key={t.name} $active={t.active}>
                  <IconSlot>{t.icon}</IconSlot>
                  <Grow>{t.name}</Grow>
                  {t.active && <Cross />}
                </DocTab>
              ))}
            </DocTabs>
          </TitleMain>
          <WindowSide>
            <WindowButtons>
              <button aria-label="Minimize"><Svg size={11} box="0 0 11 11"><path d="M0 5h11v1H0z" fill="#fff" /></Svg></button>
              <button aria-label="Restore">
                <Svg size={11} box="0 0 11 11"><path d="M.5 2.500h7v8h-7zM3 2.500v-2h7.500v7.500h-3" fill="none" stroke="#fff" /></Svg>
              </button>
              <button aria-label="Close"><Svg size={12} box="0 0 12 12"><path d="M.8.8l10.400 10.400M11.200.8L.8 11.200" stroke="#fff" strokeWidth="1.300" /></Svg></button>
            </WindowButtons>
            <ParentClass>Parent class: <DottedLink href="#character">Character</DottedLink></ParentClass>
          </WindowSide>
        </TitleBar>

        <Toolbar>
          <Section>
            <ToolButton $lead={5} $trail={6}><ToolIcon><CompileIcon /></ToolIcon>Compile</ToolButton>
            <DotsButton aria-label="Compile options"><Dots /></DotsButton>
          </Section>
          <Section>
            <ToolButton><ToolIcon><SaveIcon /></ToolIcon>Save</ToolButton>
            <ToolButton><ToolIcon><FolderLens /></ToolIcon>Browse</ToolButton>
          </Section>
          <Section>
            <ToolButton $lead={8}><ToolIcon><DiffIcon /></ToolIcon>Diff<Chevron /></ToolButton>
          </Section>
          <Section>
            <ToolButton><ToolIcon><FindIcon /></ToolIcon>Find</ToolButton>
            <ToolButton $lead={8} $trail={8}><ToolIcon><HideIcon /></ToolIcon>Hide Unrelated</ToolButton>
            <DotsButton aria-label="Hide options"><Dots /></DotsButton>
          </Section>
          <PlainSection>
            <ToolButton><ToolIcon><Gear size={20} /></ToolIcon>Class Settings</ToolButton>
            <ToolButton><ToolIcon><PencilIcon /></ToolIcon>Class Defaults</ToolButton>
            <ToolButton><ToolIcon><SimIcon /></ToolIcon>Simulation</ToolButton>
          </PlainSection>
          <PlayWrap>
            <PlayGroup>
              <button aria-label="Play"><Svg size={18} box="0 0 18 18"><path d="M1 0l16 9-16 9z" fill="#8bc34a" /></Svg></button>
              <button aria-label="Step"><Svg w={16} h={16} box="0 0 16 16" color="#7a7a7a"><path d="M0 0h3v16H0zM6 0l9 8-9 8z" /></Svg></button>
              <button aria-label="Stop"><Svg w={16} h={16} box="0 0 16 16" color="#7a7a7a"><path d="M0 0h16v16H0z" /></Svg></button>
              <button aria-label="Eject"><Svg w={16} h={16} box="0 0 16 16" color="#7a7a7a"><path d="M8 0l8 10H0zM0 12h16v3.500H0z" /></Svg></button>
              <button aria-label="Play options"><Dots /></button>
            </PlayGroup>
          </PlayWrap>
          <PickerArea>
            <SelectBox $width={179}>
              <select aria-label="Debug object"><option>No debug object selected</option></select>
              <Chevron />
            </SelectBox>
          </PickerArea>
        </Toolbar>

        <Dock>
          <Column>
            <Tabs>
              <PanelTab $active><TabIcon><CompTabIcon /></TabIcon><Grow>Components</Grow><Cross /></PanelTab>
            </Tabs>
            <ActionRow $height={32} $gap={12}>
              <AddButton><Plus />Add</AddButton>
              <Search />
            </ActionRow>
            <Tree>
              <TreeRow $indent={8}><Person color={c.text} body="#777" />BP_AJ (Self)</TreeRow>
              <TreeRow $indent={22} $gap={4}><Twist><Down /></Twist><CapsuleIcon />Capsule Component (CollisionCylinder)</TreeRow>
              <TreeRow $indent={46}><ArrowIcon />Arrow Component (Arrow)<EditLink href="#arrow">Edit in C++</EditLink></TreeRow>
              <TreeRow $indent={45}><SkeletonIcon />Mesh (CharacterMesh0)<EditLink href="#mesh">Edit in C++</EditLink></TreeRow>
              <TreeRow $indent={32} $gap={4}><Twist><Down /></Twist><SpringIcon />SpringArm</TreeRow>
              <TreeRow $indent={55}><CameraIcon />Camera</TreeRow>
              <Divider />
              <TreeRow $indent={35}><MoveIcon />Character Movement (CharMoveComp)</TreeRow>
            </Tree>

            <Tabs>
              <PanelTab $active><TabIcon><BookIcon /></TabIcon><Grow>My Blueprint</Grow><Cross /></PanelTab>
            </Tabs>
            <ActionRow $height={35} $gap={6}>
              <AddButton><Plus />Add</AddButton>
              <Search />
              <button aria-label="Settings"><Gear size={17} /></button>
            </ActionRow>
            <Outline>
              <Group title="GRAPHS" open />
              <ul>
                <TreeRow $indent={4} $height={25}><Twist><Down /></Twist><GraphIcon size={17} />EventGraph</TreeRow>
                {events.map((e) => (
                  <TreeRow key={e} $indent={30} $height={25} $gap={3}><EventIcon />{e}</TreeRow>
                ))}
              </ul>
              <Group title="FUNCTIONS" note="(33 OVERRIDABLE)" open height={32} />
              <ul>
                <TreeRow $indent={20} $height={25} $gap={3}><ConstructIcon />ConstructionScript</TreeRow>
              </ul>
              <Group title="MACROS" />
              <Group title="VARIABLES" open />
              <ul>
                <TreeRow $indent={4} $height={18} $gap={3}><Twist><Down /></Twist><b>Components</b></TreeRow>
                <VarRow $indent={30} $height={20}>Camera<TypeCell $icon><CameraIcon color={c.blue} /></TypeCell></VarRow>
                <VarRow $indent={30} $height={20}>SpringArm<TypeCell $icon><SpringIcon color={c.blue} /></TypeCell></VarRow>
                <VarRow $indent={20} $height={26}>IsJumping<TypeCell><Pill $color={c.red} />Boolean</TypeCell><LashIcon /></VarRow>
              </ul>
              <Group title="EVENT DISPATCHERS" />
            </Outline>
          </Column>

          <Column>
            <Tabs>
              <PanelTab><TabIcon><ViewportIcon /></TabIcon><Grow>Viewport</Grow></PanelTab>
              <PanelTab><TabIcon><FIcon /></TabIcon><Grow>Construction Scr...</Grow></PanelTab>
              <PanelTab $active $focus><TabIcon><GraphIcon color="#fff" size={15} /></TabIcon><Grow>Event Graph</Grow><Cross /></PanelTab>
            </Tabs>
            <Graph />
            <ResultTabs>
              <PanelTab $active><TabIcon><LogIcon /></TabIcon><Grow>Compiler Results</Grow><Cross /></PanelTab>
              <PanelTab><TabIcon><Lens /></TabIcon><Grow>Find Results</Grow></PanelTab>
            </ResultTabs>
            <ResultsBody />
          </Column>

          <Column>
            <Tabs>
              <PanelTab $active><TabIcon><PencilIcon size={16} /></TabIcon><Grow>Details</Grow><Cross /></PanelTab>
            </Tabs>
            <Details>
              <DetailSearch>
                <Search />
                <button aria-label="Property matrix"><TableIcon /></button>
                <button aria-label="View options"><Gear /></button>
              </DetailSearch>
              <Category><Down />Variable</Category>
              <PropRow>
                <label htmlFor="vn">Variable Name</label>
                <div><TextField id="vn" defaultValue="MaxWalkSpeed" /></div>
                <div />
              </PropRow>
              <PropRow>
                <label htmlFor="vt">Variable Type</label>
                <div>
                  <SelectBox $width={125} $flat>
                    <FloatPill $color="#38831f" />
                    <select id="vt"><option>Float</option></select>
                    <Chevron />
                  </SelectBox>
                  <KindButton aria-label="Container type"><Pill $color="#2f7a17" /><Chevron color="#8a8a8a" /></KindButton>
                </div>
                <div />
              </PropRow>
              <PropRow>
                <label htmlFor="ec">Expose to Cinematics</label>
                <div><Tick id="ec" type="checkbox" /></div>
                <div />
              </PropRow>
              <SubCategory><Right />Advanced</SubCategory>
              <Category><Down />Default Value</Category>
              <PropRow $off>
                <label htmlFor="ws">Max Walk Speed</label>
                <div><TextField id="ws" $off defaultValue="600.0 cm/s" /></div>
                <div />
              </PropRow>
            </Details>
          </Column>
        </Dock>

        <StatusBar>
          <StatusCell $lead={8} $trail={10}><button><FolderLens size={16} />Content Drawer</button></StatusCell>
          <StatusCell $lead={12} $trail={9}><button><LogIcon />Output Log</button></StatusCell>
          <StatusCell $lead={14} $trail={8}>
            <button><CmdIcon />Cmd <Chevron /></button>
            <ConsoleInput placeholder="Enter Console Command" aria-label="Console command" />
          </StatusCell>
          <Spring />
          <StatusCell $lead={12} $trail={15} $left><button><CheckCircle />Source Control</button></StatusCell>
          <CornerGrip><Svg size={6} box="0 0 6 6" color="#6a6a6a"><path d="M6 0v6H0z" /></Svg></CornerGrip>
        </StatusBar>
      </Inner>
    </Frame>
  );
}
